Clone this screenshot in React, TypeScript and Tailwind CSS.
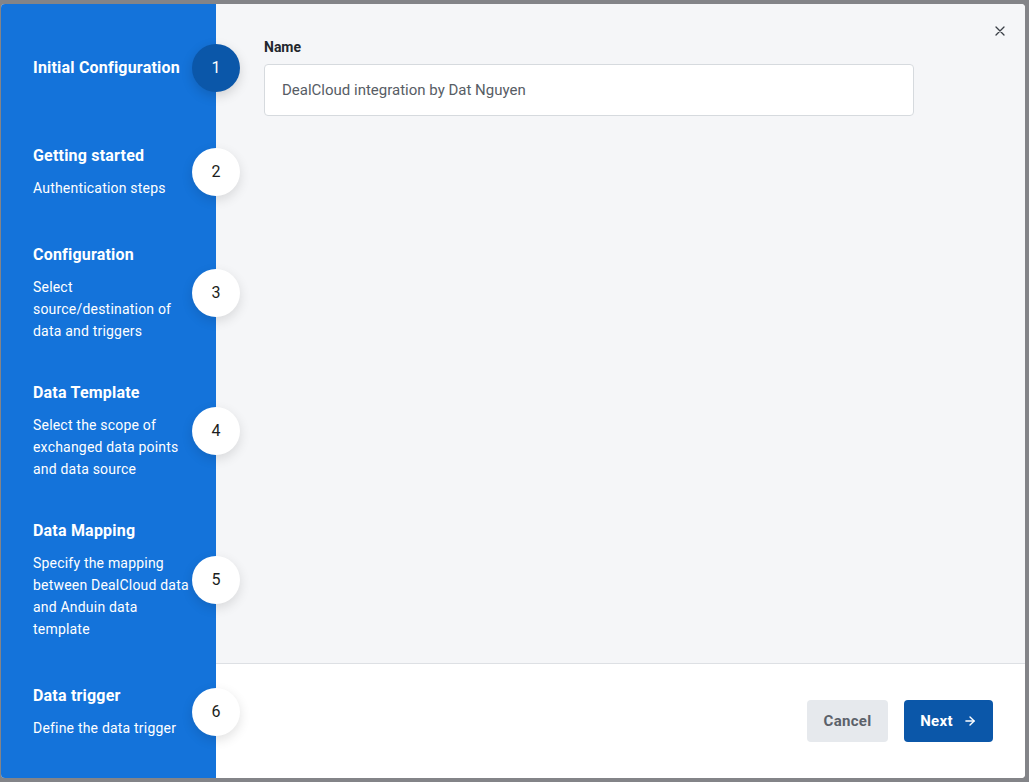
import { ArrowRight } from 'lucide-react';

const steps = [
  { n: 1, title: 'Initial Configuration', desc: [], gap: 'mt-[52px]', active: true },
  { n: 2, title: 'Getting started', desc: ['Authentication steps'], gap: 'mt-[64px]' },
  { n: 3, title: 'Configuration', desc: ['Select', 'source/destination of', 'data and triggers'], gap: 'mt-[44px]' },
  { n: 4, title: 'Data Template', desc: ['Select the scope of', 'exchanged data points', 'and data source'], gap: 'mt-[39px]' },
  { n: 5, title: 'Data Mapping', desc: ['Specify the mapping', 'between DealCloud data', 'and Anduin data', 'template'], gap: 'mt-[39px]' },
  { n: 6, title: 'Data trigger', desc: ['Define the data trigger'], gap: 'mt-[44px]' },
];

export default function App() {
  return (
    <div className="w-[1029px] h-[782px] bg-[#838488] pt-[4px] pb-[4px] pl-[1px] pr-[4px] font-['Roboto',sans-serif]">
      <div className="flex h-full rounded-[4px] overflow-hidden bg-white">
        {/* Stepper */}
        <div className="w-[215px] shrink-0 bg-[#1473da] flex flex-col relative z-10">
          {steps.map((s) => (
            <div key={s.n} className={`relative pl-[32px] pr-[20px] ${s.gap}`}>
              <div className="text-white text-[16px] leading-[24px] font-bold tracking-[0.2px]">{s.title}</div>
              {s.desc.length > 0 && (
                <div className="mt-[9px] text-white text-[14px] leading-[22px] tracking-[0.2px]">
                  {s.desc.map((d) => (
                    <div key={d}>{d}</div>
                  ))}
                </div>
              )}
              <div
                className={
                  s.active
                    ? 'absolute right-[-24px] top-1/2 -translate-y-1/2 w-[48px] h-[48px] rounded-full bg-[#0b57a9] text-white flex items-center justify-center text-[16px] shadow-[0_4px_12px_rgba(0,0,0,0.15)]'
                    : 'absolute right-[-24px] top-1/2 -translate-y-1/2 w-[48px] h-[48px] rounded-full bg-white text-[#1b1d20] flex items-center justify-center text-[16px] shadow-[0_4px_12px_rgba(0,0,0,0.12)]'
                }
              >
                {s.n}
              </div>
            </div>
          ))}
        </div>

        {/* Main */}
        <div className="flex-1 flex flex-col min-w-0">
          <div className="flex-1 bg-[#f5f6f8] relative pl-[48px] pt-[33px]">
            <button className="absolute right-[20px] top-[22px] text-[#3a3f46]">
              <svg width="10" height="10" viewBox="0 0 10 10" fill="none" stroke="currentColor" strokeWidth="1.3" strokeLinecap="round">
                <path d="M1 1L9 9M9 1L1 9" />
              </svg>
            </button>
            <div className="text-[14px] leading-[20px] font-bold text-[#23272d]">Name</div>
            <div className="mt-[7px] w-[650px] h-[52px] bg-white border border-[#d6dade] rounded-[4px] flex items-center px-[17px] text-[15px] text-[#575d65]">
              DealCloud integration by Dat Nguyen
            </div>
          </div>
          <div className="h-[115px] shrink-0 border-t border-[#dde0e4] bg-white flex items-center justify-end gap-[16px] pr-[32px]">
            <button className="w-[81px] h-[42px] rounded-[4px] bg-[#e6e9ed] text-[#5b616a] text-[15px] font-bold tracking-[0.3px]">
              Cancel
            </button>
            <button className="w-[89px] h-[42px] rounded-[4px] bg-[#0b57a9] text-white text-[15px] font-bold tracking-[0.3px] flex items-center justify-center gap-[10px]">
              Next
              <ArrowRight size={14} strokeWidth={2.4} />
            </button>
          </div>
        </div>
      </div>
    </div>
  );
}
